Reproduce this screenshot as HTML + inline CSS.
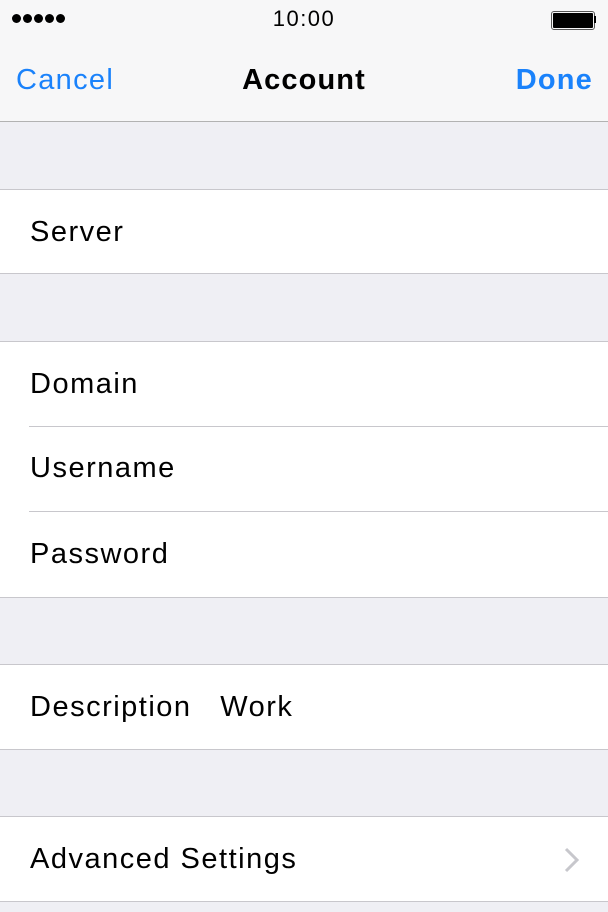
<!DOCTYPE html>
<html><head><style>
body{margin:0;width:608px;height:912px;background:#efeff4;font-family:"Liberation Sans",sans-serif;position:relative;overflow:hidden}
.nav{position:absolute;left:0;top:0;width:608px;height:121px;background:#f7f7f8;border-bottom:1px solid #b2b2b2}
.abs{position:absolute}
.row{position:absolute;left:0;width:608px;background:#fff;border-top:1px solid #c8c7cc;border-bottom:1px solid #c8c7cc}
.cell{position:absolute;left:30px;font-size:29px;letter-spacing:1.5px;color:#000;line-height:30px}
.sep{position:absolute;left:29px;right:0;height:1px;background:#c8c7cc}
.dot{position:absolute;top:14px;width:9px;height:9px;border-radius:50%;background:#000}
</style></head><body>
<div class="nav">
 <div class="dot" style="left:12px"></div><div class="dot" style="left:23px"></div><div class="dot" style="left:34px"></div><div class="dot" style="left:45px"></div><div class="dot" style="left:56px"></div>
 <div class="abs" style="left:0;width:608px;text-align:center;top:6px;font-size:22px;letter-spacing:1.5px">10:00</div>
 <div class="abs" style="left:551px;top:11px;width:40px;height:15px;border:1px solid #555;border-radius:3px;padding:1px;box-sizing:content-box"><div style="width:40px;height:15px;background:#000;border-radius:1px"></div></div>
 <div class="abs" style="left:594px;top:16px;width:2px;height:7px;background:#000"></div>
 <div class="abs" style="left:16px;top:64px;font-size:29px;letter-spacing:1.3px;color:#1a82fb">Cancel</div>
 <div class="abs" style="left:0;width:608px;text-align:center;top:64px;font-size:29px;letter-spacing:1.1px;font-weight:bold">Account</div>
 <div class="abs" style="right:15px;top:64px;font-size:29px;letter-spacing:1.2px;font-weight:bold;color:#1a82fb">Done</div>
</div>
<div class="row" style="top:189px;height:83px"><div class="cell" style="top:27px">Server</div></div>
<div class="row" style="top:341px;height:255px">
 <div class="cell" style="top:27px">Domain</div>
 <div class="sep" style="top:84px"></div>
 <div class="cell" style="top:111px">Username</div>
 <div class="sep" style="top:169px"></div>
 <div class="cell" style="top:197px">Password</div>
</div>
<div class="row" style="top:664px;height:84px"><div class="cell" style="top:27px">Description&nbsp;&nbsp; Work</div></div>
<div class="row" style="top:816px;height:84px"><div class="cell" style="top:27px">Advanced Settings</div>
<svg class="abs" style="left:563px;top:29px" width="20" height="28"><path d="M3 3 L14 14 L3 25" fill="none" stroke="#c7c7cc" stroke-width="3"/></svg></div>
</body></html>
